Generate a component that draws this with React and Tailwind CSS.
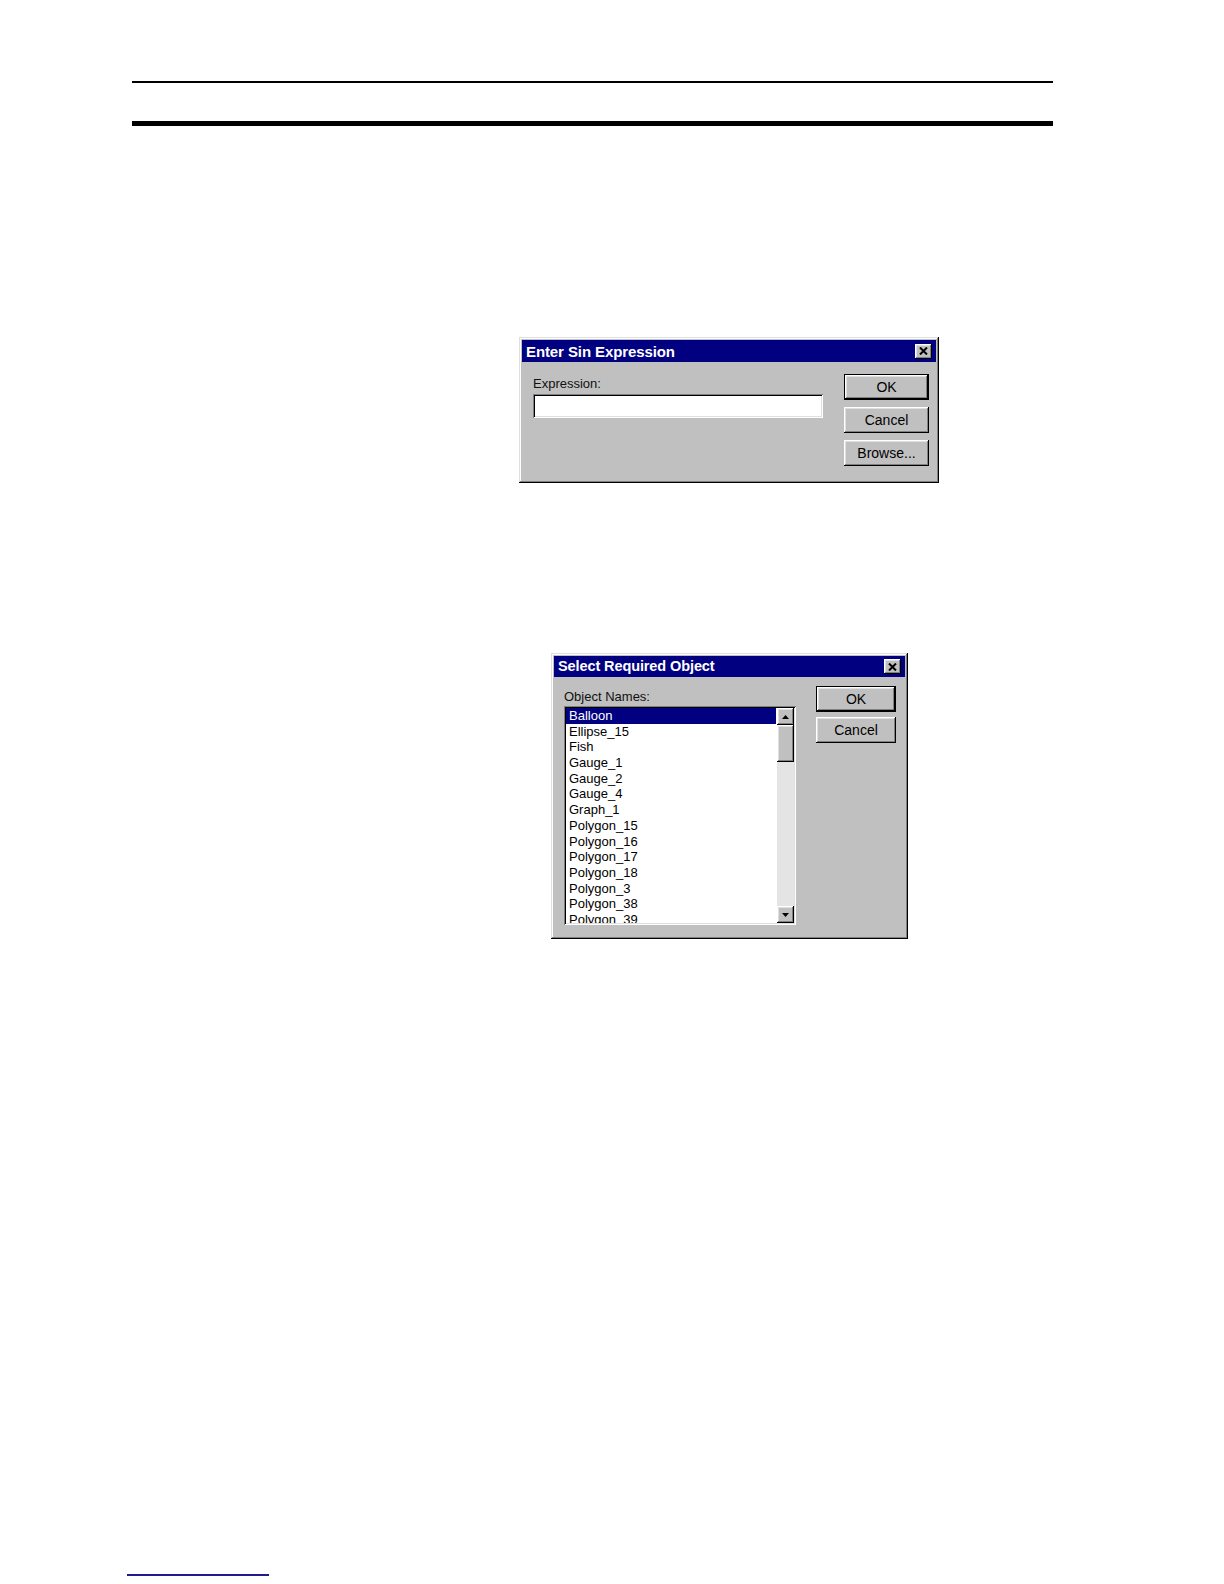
const font = "font-['Liberation_Sans',Arial,sans-serif]";

const raised =
  'bg-[#c0c0c0] shadow-[inset_-1px_-1px_#000,inset_1px_1px_#fff,inset_-2px_-2px_#808080,inset_2px_2px_#dfdfdf]';
const frame =
  'bg-[#c0c0c0] shadow-[inset_-1px_-1px_#000,inset_1px_1px_#dfdfdf,inset_-2px_-2px_#808080,inset_2px_2px_#fff]';
const sunken =
  'bg-white shadow-[inset_1px_1px_#808080,inset_-1px_-1px_#fff,inset_2px_2px_#000,inset_-2px_-2px_#dfdfdf]';

const objects = [
  'Balloon', 'Ellipse_15', 'Fish', 'Gauge_1', 'Gauge_2', 'Gauge_4', 'Graph_1',
  'Polygon_15', 'Polygon_16', 'Polygon_17', 'Polygon_18', 'Polygon_3', 'Polygon_38', 'Polygon_39',
];

const CloseButton = () => (
  <div className={`w-[17px] h-[15px] flex items-center justify-center ${raised}`}>
    <svg width="9" height="8" viewBox="0 0 9 8">
      <path d="M1 0.5 L8 7.5 M8 0.5 L1 7.5" stroke="#000" strokeWidth="2" />
    </svg>
  </div>
);

const TitleBar = ({ title, h, size }) => (
  <div className={`flex items-center justify-between bg-[#000080] pl-[4px] pr-[4px] ${h}`}>
    <span className={`text-white font-bold leading-none tracking-[-0.1px] ${size}`}>{title}</span>
    <CloseButton />
  </div>
);

const Button = ({ label, w, h, isDefault }) =>
  isDefault ? (
    <div className={`${w} ${h} border border-black`}>
      <div className={`w-full h-full flex items-center justify-center text-[14px] text-black ${raised}`}>{label}</div>
    </div>
  ) : (
    <div className={`${w} ${h} flex items-center justify-center text-[14px] text-black ${raised}`}>{label}</div>
  );

const Arrow = ({ up }) => (
  <div className={`w-[17px] h-[17px] flex items-center justify-center ${raised}`}>
    <svg width="7" height="4" viewBox="0 0 7 4">
      {up ? <path d="M3.5 0 L7 4 L0 4 Z" fill="#000" /> : <path d="M0 0 L7 0 L3.5 4 Z" fill="#000" />}
    </svg>
  </div>
);

const SinDialog = () => (
  <div className={`ml-[519px] mt-[211px] w-[420px] h-[146px] p-[3px] ${frame}`}>
    <TitleBar title="Enter Sin Expression" h="h-[22px]" size="text-[15px]" />
    <div className="flex gap-[21px] pl-[11px] pt-[12px]">
      <div className="w-[290px] pt-[2px]">
        <div className="text-[13px] leading-[16px] text-[#111]">Expression:</div>
        <div className={`mt-[2px] h-[24px] ${sunken}`} />
      </div>
      <div className="w-[85px] flex flex-col gap-[7px]">
        <Button label="OK" w="w-[85px]" h="h-[26px]" isDefault />
        <Button label="Cancel" w="w-[85px]" h="h-[26px]" />
        <Button label="Browse..." w="w-[85px]" h="h-[26px]" />
      </div>
    </div>
  </div>
);

const SelectDialog = () => (
  <div className={`ml-[551px] mt-[170px] w-[357px] h-[286px] p-[3px] ${frame}`}>
    <TitleBar title="Select Required Object" h="h-[21px]" size="text-[14.5px]" />
    <div className="flex gap-[20px] pl-[10px] pt-[9px]">
      <div className="w-[232px] pt-[3px]">
        <div className="text-[13px] leading-[16px] text-[#111]">Object Names:</div>
        <div className={`mt-[1px] h-[219px] p-[2px] flex ${sunken}`}>
          <div className="flex-1 overflow-hidden">
            {objects.map((name, i) => (
              <div
                key={name}
                className={`h-[15.7px] leading-[15.7px] text-[13px] pl-[3px] mr-[1px] whitespace-nowrap ${
                  i === 0 ? 'bg-[#000080] text-white' : 'text-black'
                }`}
              >
                {name}
              </div>
            ))}
          </div>
          <div className="w-[17px] flex flex-col bg-[#e4e4e4]">
            <Arrow up />
            <div className={`h-[37px] ${raised}`} />
            <div className="flex-1" />
            <Arrow />
          </div>
        </div>
      </div>
      <div className="w-[80px] flex flex-col gap-[5px]">
        <Button label="OK" w="w-[80px]" h="h-[26px]" isDefault />
        <Button label="Cancel" w="w-[80px]" h="h-[26px]" />
      </div>
    </div>
  </div>
);

export default function App() {
  return (
    <div className={`w-[1224px] h-[1584px] bg-white overflow-hidden flex flex-col ${font}`}>
      <div className="mt-[81px] ml-[132px] w-[921px] h-[2px] bg-black" />
      <div className="mt-[38px] ml-[132px] w-[921px] h-[5px] bg-black" />
      <SinDialog />
      <SelectDialog />
      <div className="mt-auto mb-[8px] ml-[127px] w-[142px] h-[2px] bg-[#1c1c8c]" />
    </div>
  );
}
